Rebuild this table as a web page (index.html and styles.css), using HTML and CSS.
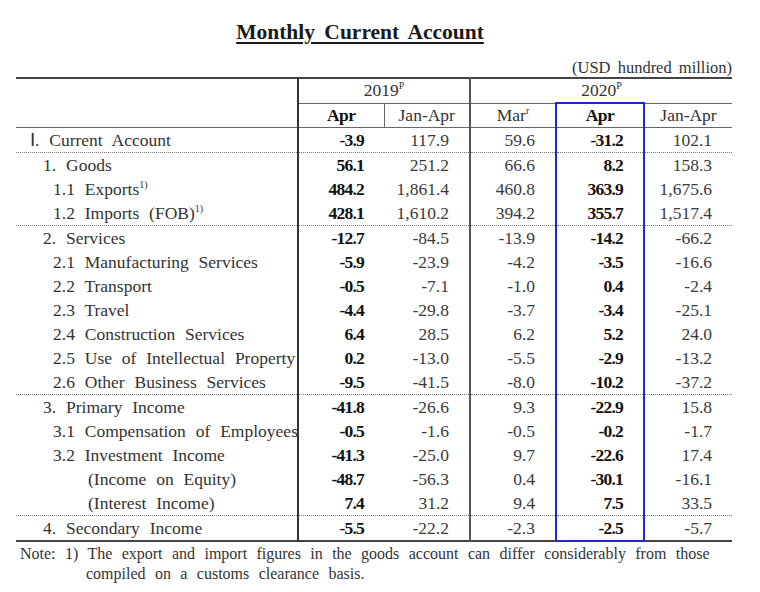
FILE: index.html
```html
<!DOCTYPE html>
<html>
<head>
<meta charset="utf-8">
<link rel="stylesheet" href="styles.css">
</head>
<body>
<div class="page">
  <h1 class="title">Monthly Current Account</h1>
  <div class="unit">(USD hundred million)</div>
  <table class="bop">
    <colgroup>
      <col class="c-label"><col class="c-num"><col class="c-num"><col class="c-num"><col class="c-hl"><col class="c-last">
    </colgroup>
    <thead>
      <tr class="h1">
        <th class="blank" rowspan="2"></th>
        <th class="year y19" colspan="2">2019<sup>P</sup></th>
        <th class="year y20" colspan="3">2020<sup>P</sup></th>
      </tr>
      <tr class="h2">
        <th class="b">Apr</th>
        <th class="sep19">Jan-Apr</th>
        <th class="g20">Mar<sup>r</sup></th>
        <th class="hl hl-top b">Apr</th>
        <th>Jan-Apr</th>
      </tr>
    </thead>
    <tbody>
      <tr class="dot-below"><td class="l0">Ⅰ. Current Account</td><td class="b">-3.9</td><td>117.9</td><td class="g20">59.6</td><td class="hl b">-31.2</td><td>102.1</td></tr>
      <tr><td class="l1">1. Goods</td><td class="b">56.1</td><td>251.2</td><td class="g20">66.6</td><td class="hl b">8.2</td><td>158.3</td></tr>
      <tr><td class="l2">1.1 Exports<sup>1)</sup></td><td class="b">484.2</td><td>1,861.4</td><td class="g20">460.8</td><td class="hl b">363.9</td><td>1,675.6</td></tr>
      <tr class="dot-below"><td class="l2">1.2 Imports (FOB)<sup>1)</sup></td><td class="b">428.1</td><td>1,610.2</td><td class="g20">394.2</td><td class="hl b">355.7</td><td>1,517.4</td></tr>
      <tr><td class="l1">2. Services</td><td class="b">-12.7</td><td>-84.5</td><td class="g20">-13.9</td><td class="hl b">-14.2</td><td>-66.2</td></tr>
      <tr><td class="l2">2.1 Manufacturing Services</td><td class="b">-5.9</td><td>-23.9</td><td class="g20">-4.2</td><td class="hl b">-3.5</td><td>-16.6</td></tr>
      <tr><td class="l2">2.2 Transport</td><td class="b">-0.5</td><td>-7.1</td><td class="g20">-1.0</td><td class="hl b">0.4</td><td>-2.4</td></tr>
      <tr><td class="l2">2.3 Travel</td><td class="b">-4.4</td><td>-29.8</td><td class="g20">-3.7</td><td class="hl b">-3.4</td><td>-25.1</td></tr>
      <tr><td class="l2">2.4 Construction Services</td><td class="b">6.4</td><td>28.5</td><td class="g20">6.2</td><td class="hl b">5.2</td><td>24.0</td></tr>
      <tr><td class="l2">2.5 Use of Intellectual Property</td><td class="b">0.2</td><td>-13.0</td><td class="g20">-5.5</td><td class="hl b">-2.9</td><td>-13.2</td></tr>
      <tr class="dot-below"><td class="l2">2.6 Other Business Services</td><td class="b">-9.5</td><td>-41.5</td><td class="g20">-8.0</td><td class="hl b">-10.2</td><td>-37.2</td></tr>
      <tr><td class="l1">3. Primary Income</td><td class="b">-41.8</td><td>-26.6</td><td class="g20">9.3</td><td class="hl b">-22.9</td><td>15.8</td></tr>
      <tr><td class="l2">3.1 Compensation of Employees</td><td class="b">-0.5</td><td>-1.6</td><td class="g20">-0.5</td><td class="hl b">-0.2</td><td>-1.7</td></tr>
      <tr><td class="l2">3.2 Investment Income</td><td class="b">-41.3</td><td>-25.0</td><td class="g20">9.7</td><td class="hl b">-22.6</td><td>17.4</td></tr>
      <tr><td class="l3">(Income on Equity)</td><td class="b">-48.7</td><td>-56.3</td><td class="g20">0.4</td><td class="hl b">-30.1</td><td>-16.1</td></tr>
      <tr class="dot-below"><td class="l3">(Interest Income)</td><td class="b">7.4</td><td>31.2</td><td class="g20">9.4</td><td class="hl b">7.5</td><td>33.5</td></tr>
      <tr class="last"><td class="l1">4. Secondary Income</td><td class="b">-5.5</td><td>-22.2</td><td class="g20">-2.3</td><td class="hl hl-bottom b">-2.5</td><td>-5.7</td></tr>
    </tbody>
  </table>
  <p class="note">Note: 1) The export and import figures in the goods account can differ considerably from those<br>compiled on a customs clearance basis.</p>
</div>
</body>
</html>
```
FILE: styles.css
```css
html, body {
  margin: 0;
  padding: 0;
  background: #ffffff;
}
.page {
  padding: 0 0 0 16px;
  width: 716px;
  font-family: "Liberation Serif", "Times New Roman", serif;
  color: #2e2e2e;
}
.title {
  margin: 20px 28px 0 0;
  font-size: 21.5px;
  line-height: 24px;
  font-weight: bold;
  text-align: center;
  text-decoration: underline;
  text-underline-offset: 3px;
  word-spacing: 4px;
  color: #1a1a1a;
}
.unit {
  margin-top: 15px;
  text-align: right;
  font-size: 16.5px;
  line-height: 18px;
  word-spacing: 3px;
  color: #333;
}
.bop {
  border-collapse: collapse;
  width: 716px;
  table-layout: fixed;
  font-size: 17.5px;
  border-top: 2px solid #444;
  border-bottom: 2px solid #444;
}
.c-label { width: 282px; }
.c-num { width: 86px; }
.c-hl { width: 88px; }
.c-last { width: 88px; }
.bop th {
  font-weight: normal;
  padding: 0;
  text-align: center;
  color: #333;
}
.bop .h1 th { height: 23px; }
.bop .h2 th { height: 23px; border-bottom: 1px solid #666; }
.bop th.blank { border-right: 2px solid #333; border-bottom: 1px solid #666; }
.bop th.year { border-bottom: 1px solid #666; }
.bop th.y19 { border-right: 2px solid #555; }
.bop th.sep19 { border-left: 1px solid #666; }
.bop .h2 th.b { font-weight: bold; color: #111; letter-spacing: -0.5px; }
sup {
  font-size: 10px;
  line-height: 0;
  vertical-align: 7px;
}
.bop td {
  height: 24px;
  padding: 0 20px 0 0;
  text-align: right;
  white-space: nowrap;
  line-height: 20px;
  color: #3a3a3a;
}
.bop td:first-child {
  text-align: left;
  padding-right: 0;
  word-spacing: 5.5px;
  border-right: 2px solid #333;
  color: #333;
}
.bop td.l0 { padding-left: 14px; }
.bop td.l1 { padding-left: 27px; }
.bop td.l2 { padding-left: 37px; }
.bop td.l3 { padding-left: 72px; }
.bop td.b {
  font-weight: bold;
  color: #111;
  letter-spacing: -0.8px;
}
.bop .g20 { border-left: 2px solid #555; }
.bop .hl {
  border-left: 2px solid #2323d8;
  border-right: 2px solid #2323d8;
}
.bop .hl-top { border-top: 2px solid #2323d8; }
.bop .hl-bottom { border-bottom: 2px solid #2323d8; }
.bop tr.dot-below td { border-bottom: 1px dotted #777; }
.bop tr.dot-below td.hl { border-bottom: 1px dotted #777; }
.note {
  margin: 2px 0 0 4px;
  padding-left: 66px;
  text-indent: -66px;
  font-size: 16px;
  line-height: 20px;
  word-spacing: 5.4px;
  color: #333;
}
```
